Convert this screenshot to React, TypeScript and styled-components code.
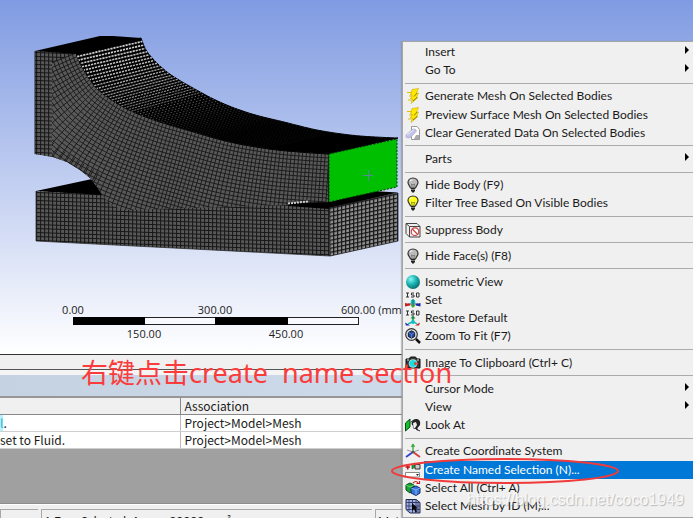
import React from "react";
import styled, { createGlobalStyle } from "styled-components";

const GlobalStyle = createGlobalStyle`
  * { box-sizing: border-box; }
  body { margin: 0; overflow: hidden; background: #f0f0f0; }
  body, button { font-family: Lato, "Noto Sans CJK SC", sans-serif; font-size: 12px; color: #1a1a1a; }
`;

const Page = styled.main`
  position: relative;
  display: flex;
  flex-direction: column;
  height: 100vh;
  overflow: hidden;
`;

const Viewport = styled.section`
  flex: 1;
  min-height: 0;
  overflow: hidden;
  background: linear-gradient(#809be2, #ffffff);
  border-bottom: 1px solid #333;
  svg { display: block; }
`;

const Splitter = styled.div`
  height: 15px;
  background: #f0f0f0;
  border-bottom: 1px solid #555;
`;

const Messages = styled.section`
  height: 134px;
  background: #a0a0a0;
  border-top: 5px solid #f4f4f4;
  border-bottom: 1px solid #8d8d8d;
`;

const PaneTitle = styled.div`
  height: 21px;
  background: linear-gradient(90deg, #c4d2e2, #d3e0ee);
`;

const Table = styled.table`
  width: 100%;
  table-layout: fixed;
  border-collapse: collapse;
  border-top: 2px solid #969696;
  font-family: "Noto Sans CJK SC", sans-serif;
  th, td {
    height: 17px;
    padding: 0 0 0 4px;
    line-height: 16px;
    font-size: 12px;
    font-weight: 400;
    text-align: left;
    white-space: nowrap;
    overflow: hidden;
    border-bottom: 1px solid #cfcfcf;
    background: #fff;
  }
  th { background: #f0f0f0; border-bottom-color: #888; }
  th:first-child, td:first-child { width: 180px; padding-left: 0; border-right: 1px solid #bbb; }
  th:first-child { border-right-color: #888; }
`;

const Mark = styled.span`
  background: #b4f3ff;
  color: #2ab4d0;
`;

const StatusBar = styled.footer`
  display: grid;
  grid-template-columns: 38px 331px 1fr;
  column-gap: 3px;
  height: 14px;
  padding-top: 4px;
  background: #f0f0f0;
  border-top: 1px solid #fff;
`;

const StatusCell = styled.div`
  height: 22px;
  padding: 2px 0 0 2px;
  line-height: 17px;
  border-top: 1px solid #a8a8a8;
  border-left: 1px solid #a8a8a8;
  white-space: nowrap;
`;

const Menu = styled.div`
  position: absolute;
  top: 41px;
  right: 0;
  bottom: 0;
  left: 402px;
  display: flex;
  flex-direction: column;
  padding: 1px 0 2px 2px;
  background: #f0f0f0;
  border: 1px solid #a5a5a5;
  border-right: 0;
  box-shadow: -1px 0 1px #8888;
`;

const Divider = styled.hr`
  flex: 8;
  width: 100%;
  min-height: 0;
  margin: 0;
  border: 0;
  background: linear-gradient(#ababab, #ababab) center / 100% 1px no-repeat;
`;

const Item = styled.button<{ $active?: boolean }>`
  flex: 18;
  min-height: 0;
  display: grid;
  grid-template-columns: 19px 1fr 9px;
  align-items: center;
  padding: 0;
  border: 0;
  background: none;
  text-align: left;
  line-height: 18px;
  white-space: nowrap;
  svg { display: block; }
  color: ${(p) => (p.$active ? "#fff" : "#1a1a1a")};
`;

const Label = styled.span<{ $active?: boolean }>`
  display: block;
  align-self: stretch;
  padding-left: 1px;
  background: ${(p) => (p.$active ? "#0078d7" : "transparent")};
  grid-column: 2 / ${(p) => (p.$active ? "4" : "3")};
`;

const Note = styled.p`
  position: absolute;
  top: 354px;
  left: 81px;
  margin: 0;
  color: #fb3c3c;
  font-family: "Noto Sans", "Noto Sans CJK SC", sans-serif;
  font-size: 27px;
  line-height: 38px;
  white-space: pre;
  pointer-events: none;
`;

const Ring = styled.svg`
  position: absolute;
  top: 457px;
  left: 390px;
  pointer-events: none;
`;

const Watermark = styled.span`
  position: absolute;
  right: 9px;
  bottom: 6px;
  color: #ffffffcc;
  font-family: "Liberation Sans", sans-serif;
  font-size: 16px;
  line-height: 24px;
  text-shadow: 1px 1px 1px #8888;
  pointer-events: none;
`;

type Pt = [number, number];

const front: Pt[] = [[76, 53], [80, 63], [90, 80], [102, 93], [127, 109], [157, 121], [187, 130], [230, 142], [270, 149], [300, 152], [329, 154]];
const back: Pt[] = [[141, 38], [148, 53], [167, 72], [193, 88], [222, 103], [252, 114], [284, 122], [317, 130], [350, 135], [375, 137], [398, 138]];

// Catmull-Rom interpolation through the given points.
function spline(pts: Pt[], per: number): Pt[] {
  const out: Pt[] = [];
  for (let i = 0; i < pts.length - 1; i++) {
    const a = pts[Math.max(0, i - 1)], b = pts[i], c = pts[i + 1], d = pts[Math.min(pts.length - 1, i + 2)];
    for (let s = 0; s < per; s++) {
      const t = s / per;
      const f = (k: 0 | 1) =>
        0.5 * (2 * b[k] + (c[k] - a[k]) * t + (2 * a[k] - 5 * b[k] + 4 * c[k] - d[k]) * t * t + (3 * b[k] - a[k] - 3 * c[k] + d[k]) * t * t * t);
      out.push([f(0), f(1)]);
    }
  }
  out.push(pts[pts.length - 1]);
  return out;
}

// Points spread evenly along a polyline.
function even(pts: Pt[], n: number): Pt[] {
  const acc = [0];
  for (let i = 1; i < pts.length; i++) acc.push(acc[i - 1] + Math.hypot(pts[i][0] - pts[i - 1][0], pts[i][1] - pts[i - 1][1]));
  const total = acc[acc.length - 1];
  return Array.from({ length: n + 1 }, (_, k) => {
    const d = (total * k) / n;
    let i = 1;
    while (i < acc.length - 1 && acc[i] < d) i++;
    const t = (d - acc[i - 1]) / (acc[i] - acc[i - 1]);
    return [pts[i - 1][0] + (pts[i][0] - pts[i - 1][0]) * t, pts[i - 1][1] + (pts[i][1] - pts[i - 1][1]) * t] as Pt;
  });
}

const path = (pts: Pt[]) => "M" + pts.map((p) => p.map((v) => v.toFixed(1)).join(" ")).join("L");

const frontEven = even(spline(front, 8), 76);
const backEven = even(spline(back, 8), 76);
const normals: Pt[] = frontEven.map((_, i) => {
  const a = frontEven[Math.max(0, i - 3)], b = frontEven[Math.min(frontEven.length - 1, i + 3)];
  const l = Math.hypot(b[0] - a[0], b[1] - a[1]);
  return [-(b[1] - a[1]) / l, (b[0] - a[0]) / l];
});
const shift = (d: number): Pt[] => frontEven.map((p, i) => [p[0] + normals[i][0] * d, p[1] + normals[i][1] * d]);

const outline = path(frontEven) + "L329 202L288 205L125 210L112 206L103 196L97 187L90 178L80 170L67 162L50 156L35 154L35 51Z";

function Model() {
  return (
    <svg width="693" height="353" viewBox="0 0 693 353" role="img" aria-label="Meshed bracket with one selected face">
      <defs>
        <pattern id="grid" width="4" height="4" patternUnits="userSpaceOnUse" patternTransform="translate(36 52) skewY(2)">
          <rect width="4" height="4" fill="#585858" />
          <path d="M0 .5H4M.5 0V4" stroke="#161616" />
        </pattern>
        <pattern id="side" width="4" height="4" patternUnits="userSpaceOnUse" patternTransform="translate(329 208) skewY(-12)">
          <rect width="4" height="4" fill="#909090" />
          <path d="M0 .5H4M.5 0V4" stroke="#151515" strokeWidth="1.3" />
        </pattern>
        <clipPath id="body"><path d={outline} /></clipPath>
      </defs>
      <path d="M36 191L92 179L104 196Z" />
      <path d="M36 191L103 195L288 201L329 208L330 256L36 241Z" fill="url(#grid)" />
      <path d="M36 191V241L330 256" fill="none" stroke="#222" strokeWidth=".7" />
      <path d={outline} fill="url(#grid)" />
      <g clipPath="url(#body)" fill="none" stroke="#171717" strokeWidth=".9">
        <path d={path([...frontEven, ...shift(170).reverse()])} fill="#585858" stroke="none" />
        {Array.from({ length: 40 }, (_, i) => <path key={i} d={path(shift(i * 4))} />)}
        {frontEven.map((p, i) => (
          <path key={i} d={path([p, [p[0] + normals[i][0] * 150, p[1] + normals[i][1] * 150]])} />
        ))}
        {frontEven.slice(0, 22).map((p, i) => (
          <path key={i} d={path([
            [p[0] + normals[i][0] * 70 + normals[i][1] * 2, p[1] + normals[i][1] * 70],
            [p[0] + normals[i][0] * 150 + normals[i][1] * 5, p[1] + normals[i][1] * 150],
          ])} />
        ))}
      </g>
      <path d="M35 51L52 52V157L35 154Z" fill="url(#grid)" />
      <path d="M35 51V154" stroke="#222" />
      <path d="M35 51L100 36H113L141 38L76 54Z" />
      <path d={path([...frontEven, ...[...backEven].reverse()]) + "Z"} stroke="#000" />
      <g fill="none" stroke="#d2d2d2">
        {frontEven.slice(1, 60).map((p, i) => (
          <path key={i} d={path([p, backEven[i + 1]])} strokeDasharray={i < 22 ? "2.2 .9" : "1.5 2"} strokeDashoffset={i % 3}
            strokeWidth={Math.max(0.5, 1.7 - i * 0.035)} opacity={Math.max(0.1, 1 - i * 0.02)} />
        ))}
      </g>
      <path d="M288 203L329 202L372 191L398 192.500L329 209L288 206Z" />
      <path d="M288 203.500L308 201.500" stroke="#ccc" strokeWidth="2" strokeDasharray="2 1" />
      <path d="M329 208L398 193V241L330 256Z" fill="url(#side)" stroke="#222" strokeWidth=".8" />
      <path d="M329 154L397 139V187L329 202Z" fill="#00bf00" stroke="#003800" strokeDasharray="2 1.500" />
      <path d="M363 175.500H373M368.500 170V181" stroke="#598799" />
      <rect x="73.500" y="317.500" width="285" height="7" fill="#f7f9ff" stroke="#222" />
      <path d="M73 317H145V325H73ZM215 317H288V325H215Z" />
      <g fontFamily="Open Sans" fontSize="11" fill="#222" textAnchor="middle">
        <text x="73" y="314">0.00</text>
        <text x="215" y="314">300.00</text>
        <text x="341" y="314" textAnchor="start">600.00 (mm)</text>
        <text x="144" y="338">150.00</text>
        <text x="286" y="338">450.00</text>
      </g>
    </svg>
  );
}

const Svg = (p: { children: React.ReactNode }) => (
  <svg width="16" height="16" viewBox="0 0 16 16" aria-hidden="true">{p.children}</svg>
);

const Bolt = () => (
  <Svg>
    <path d="M7 1.500L13.500 .5L11.500 5H13.500L11.500 9.500H13L6 15.500L7.500 11H5.500L7 7H5.500Z" fill="#ffe900" stroke="#c8ab00" strokeWidth=".6" />
    <path d="M2 4.500H7M4 8H7.500M3 12H6.500" stroke="#e3bd00" />
    <path d="M12 5L9 8.500M12 9.500L8 13" stroke="#756500" strokeWidth=".8" />
  </Svg>
);
const Eraser = () => (
  <Svg>
    <path d="M6.500 1.500H12L14.500 4.500V14.500H6.500Z" fill="#fff" stroke="#999" />
    <path d="M11 10H14V14H9Z" fill="#aaa" />
    <path d="M1 10L8 4Q11 3.500 11.500 6L6 12Q3 14 1 12Z" fill="#c3c3e6" stroke="#a5a5cf" strokeWidth=".7" />
    <path d="M2 10L8.500 5" stroke="#eeeeff" />
  </Svg>
);
const Bulb = ({ fill }: { fill: string }) => (
  <Svg>
    <path d="M8 1C4.800 1 3 3.200 3 5.600C3 8 5 8.800 5.500 11H10.500C11 8.800 13 8 13 5.600C13 3.200 11.200 1 8 1Z" fill={fill} stroke="#333" strokeWidth="1.200" />
    <path d="M5 4Q6 2.500 7.500 3" stroke="#fff" fill="none" />
    <path d="M7 10L6.500 7L8 8L9.500 7L9 10" stroke="#555" strokeWidth=".6" fill="none" />
    <path d="M6 11H10V14L8 16L6 14Z" fill="#222" />
    <path d="M6 12.500H10" stroke="#aaa" strokeWidth=".7" />
  </Svg>
);
const Suppress = () => (
  <Svg>
    <path d="M1 1.500H12L15 4.500V15H4.500L1 11.500Z" fill="#eee" stroke="#444" />
    <path d="M1 1.500L4.500 4.500H15M4.500 4.500V15" fill="none" stroke="#444" />
    <circle cx="10" cy="9.700" r="3.800" fill="#fff" stroke="#c94040" strokeWidth="1.200" />
    <path d="M7.300 7L12.700 12.500" stroke="#c94040" strokeWidth="1.200" />
  </Svg>
);
const Sphere = () => (
  <Svg>
    <defs>
      <radialGradient id="ball" cx=".35" cy=".3" r=".7">
        <stop offset="0" stopColor="#8ff5ef" /><stop offset=".5" stopColor="#20b9b9" /><stop offset="1" stopColor="#087474" />
      </radialGradient>
    </defs>
    <circle cx="8" cy="8" r="7" fill="url(#ball)" />
  </Svg>
);
const Iso = ({ up }: { up?: boolean }) => (
  <Svg>
    <path d="M1 1H4M2.500 1V5M1 5H4M9 1H6.500V3H9V5H6M11.500 1H14V5H11.500Z" fill="none" stroke="#333" />
    {up ? (
      <>
        <path d="M8 12V7" stroke="#158b35" strokeWidth="1.500" /><path d="M5.500 8.500L8 5.500L10.500 8.500Z" fill="#158b35" />
        <path d="M7 12L3 14" stroke="#13b5b5" strokeWidth="1.500" /><path d="M0 12.500L1 15.500H5Z" fill="#1526b4" />
        <path d="M9 12L12 14" stroke="#13b5b5" strokeWidth="1.500" /><path d="M15 12.500L14 15.500H10Z" fill="#ca1d1d" />
        <circle cx="8" cy="12" r="2" fill="#16bdbd" />
      </>
    ) : (
      <>
        <path d="M3 12H13" stroke="#333" /><path d="M0 11V14.500L5 13.500V12Z" fill="#ca1d1d" />
        <path d="M15.500 11V14.500L11 13.500V12Z" fill="#1526b4" /><path d="M5.500 13H10.500L8 16Z" fill="#2aaa2a" />
        <circle cx="8" cy="10" r="2.400" fill="#16bdbd" /><path d="M8 7V13" stroke="#087171" />
      </>
    )}
  </Svg>
);
const ZoomFit = () => (
  <Svg>
    <circle cx="6.500" cy="6.500" r="5.800" fill="#e8e8e8" stroke="#333" strokeWidth="1.200" />
    <path d="M6.500 2.800L9.700 4.500V8.500L6.500 10.200L3.300 8.500V4.500Z" fill="#23489a" stroke="#101833" />
    <path d="M3.300 4.500L6.500 6.300L9.700 4.500M6.500 6.500V10" fill="none" stroke="#8aa8e8" strokeWidth=".6" />
    <path d="M11 11L15 15" stroke="#111" strokeWidth="2.500" />
  </Svg>
);
const Camera = () => (
  <Svg>
    <path d="M1 4H4L5.500 2H10.500L12 4H15V13H1Z" fill="#363636" stroke="#111" />
    <path d="M2 5H4M12 5H14" stroke="#ddd" /><circle cx="8" cy="8.500" r="4" fill="#18dce0" stroke="#eee" strokeWidth=".6" />
  </Svg>
);
const LookAt = () => (
  <Svg>
    <path d="M.5 6L5 2V10L.5 14Z" fill="#16bd2f" stroke="#064d10" />
    <path d="M7 5Q8 1.500 12 2Q16 3 15 8L12.500 11V14L11 12Q7 12 8 9L6.500 7Z" fill="#222" />
    <path d="M8 6L11 5L12 8L10 11H8.500Z" fill="#eee" /><path d="M7.500 3.500L6 5.500M11 12L15 14" stroke="#222" />
  </Svg>
);
const Axes = () => (
  <Svg>
    <path d="M8 9V1M8 1L6.500 4M8 1L9.500 4" stroke="#43ae43" strokeWidth="1.400" fill="none" />
    <path d="M8 9L1 14" stroke="#3042d3" strokeWidth="1.800" /><path d="M8 9L15 14" stroke="#d83b3b" strokeWidth="1.800" />
    <path d="M2 7L8 9L14 7" fill="none" stroke="#999" />
    <circle cx="8" cy="9" r="1.300" fill="#555" />
  </Svg>
);
const Named = () => (
  <Svg>
    <path d="M.5 5H5M2.750 2.500V7.500" stroke="#b51b1b" strokeWidth="1.600" />
    <path d="M7 2L10 1V5L7 7Z" fill="#17a535" stroke="#104d18" strokeWidth=".6" />
    <path d="M10 2.500H15V7H10Z" fill="#ccc" stroke="#333" /><path d="M.5 10.500H14.500V15H.5Z" fill="#fff" stroke="#888" />
    <path d="M11 12L14 12L12.500 14Z" fill="#222" />
  </Svg>
);
const SelectAll = () => (
  <Svg>
    <path d="M1 5L5 3L9 5V10L5 13L1 10Z" fill="#15a72f" stroke="#0b4616" /><path d="M1 5L5 7L9 5" fill="none" stroke="#8ff498" strokeWidth=".7" />
    <path d="M6 8L11 6L15 8V13L11 15.500L6 13Z" fill="#3975dc" stroke="#112a66" /><path d="M6 8L11 10L15 8M11 10V15" fill="none" stroke="#a4cbff" strokeWidth=".7" />
    <path d="M8 3Q11 0 13 3M11.500 3.500H14.500V1" fill="none" stroke="#cb1d1d" strokeWidth="1.200" />
  </Svg>
);
const MeshId = () => (
  <Svg>
    <path d="M1 1.500H11L15 4.500V15H5L1 11.500Z" fill="#9caee4" stroke="#25294a" />
    <path d="M1 4.500H13M1 8H15M2 11.500H15M4 1V13M7.500 1V15M11 1V15M5 4.500H15M13 4V15" stroke="#2d3358" strokeWidth=".8" />
    <path d="M7 5V13L9 11L10.500 14.500L12 13.500L10.500 10.500H13Z" fill="#070707" />
  </Svg>
);

type Entry = { label: string; icon?: React.ReactNode; sub?: boolean; active?: boolean };

const groups: Entry[][] = [
  [{ label: "Insert", sub: true }, { label: "Go To", sub: true }],
  [
    { label: "Generate Mesh On Selected Bodies", icon: <Bolt /> },
    { label: "Preview Surface Mesh On Selected Bodies", icon: <Bolt /> },
    { label: "Clear Generated Data On Selected Bodies", icon: <Eraser /> },
  ],
  [{ label: "Parts", sub: true }],
  [
    { label: "Hide Body (F9)", icon: <Bulb fill="#bbb" /> },
    { label: "Filter Tree Based On Visible Bodies", icon: <Bulb fill="#ffff13" /> },
  ],
  [{ label: "Suppress Body", icon: <Suppress /> }],
  [{ label: "Hide Face(s) (F8)", icon: <Bulb fill="#bbb" /> }],
  [
    { label: "Isometric View", icon: <Sphere /> },
    { label: "Set", icon: <Iso /> },
    { label: "Restore Default", icon: <Iso up /> },
    { label: "Zoom To Fit (F7)", icon: <ZoomFit /> },
  ],
  [{ label: "Image To Clipboard (Ctrl+ C)", icon: <Camera /> }],
  [{ label: "Cursor Mode", sub: true }, { label: "View", sub: true }, { label: "Look At", icon: <LookAt /> }],
  [
    { label: "Create Coordinate System", icon: <Axes /> },
    { label: "Create Named Selection (N)...", icon: <Named />, active: true },
    { label: "Select All (Ctrl+ A)", icon: <SelectAll /> },
    { label: "Select Mesh by ID (M)...", icon: <MeshId /> },
  ],
];

export default function App() {
  return (
    <Page>
      <GlobalStyle />
      <Viewport><Model /></Viewport>
      <Splitter />
      <Messages>
        <PaneTitle />
        <Table>
          <thead><tr><th /><th>Association</th></tr></thead>
          <tbody>
            <tr><td><Mark>l</Mark>.</td><td>Project&gt;Model&gt;Mesh</td></tr>
            <tr><td>set to Fluid.</td><td>Project&gt;Model&gt;Mesh</td></tr>
          </tbody>
        </Table>
      </Messages>
      <StatusBar>
        <StatusCell />
        <StatusCell>1 Face Selected: Area = 30000 mm²</StatusCell>
        <StatusCell>Metric</StatusCell>
      </StatusBar>
      <Menu role="menu">
        {groups.map((group, g) => (
          <React.Fragment key={g}>
            {g > 0 && <Divider />}
            {group.map((e) => (
              <Item key={e.label} role="menuitem" $active={e.active}>
                {e.icon ?? <span />}
                <Label $active={e.active}>{e.label}</Label>
                {e.sub && (
                  <svg width="8" height="12" viewBox="0 0 8 12" aria-hidden="true"><path d="M1 0L5 4L1 8Z" /></svg>
                )}
              </Item>
            ))}
          </React.Fragment>
        ))}
      </Menu>
      <Note>右键点击create&nbsp; name section</Note>
      <Ring width="231" height="28" viewBox="0 0 231 28" aria-hidden="true">
        <ellipse cx="115" cy="14" rx="113" ry="12" fill="none" stroke="#ef3b3b" strokeWidth="2" />
      </Ring>
      <Watermark>https://blog.csdn.net/coco1949</Watermark>
    </Page>
  );
}
